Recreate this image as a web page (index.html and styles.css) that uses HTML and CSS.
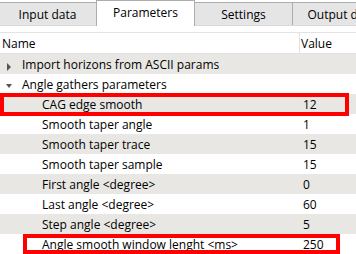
FILE: index.html
```html
<!DOCTYPE html>
<html lang="en">
<head>
  <meta charset="UTF-8" />
  <title>Parameters</title>
  <link rel="stylesheet" href="styles.css">
</head>
<body>

  <div class="tabbar">
    <div class="tab first">Input data</div>
    <div class="tab active">Parameters</div>
    <div class="tab">Settings</div>
    <div class="tab">Output data</div>
  </div>

  <div class="pane">
    <div class="tree">
      <div class="row head">
        <div class="name">Name</div>
        <div class="value">Value</div>
      </div>

      <div class="row alt">
        <div class="name lvl1"><span class="arrow closed"></span>Import horizons from ASCII params</div>
        <div class="value"></div>
      </div>
      <div class="row">
        <div class="name lvl1"><span class="arrow open"></span>Angle gathers parameters</div>
        <div class="value"></div>
      </div>

      <div class="row alt mark-wide">
        <div class="name lvl2">CAG edge smooth</div>
        <div class="value">12</div>
      </div>
      <div class="row">
        <div class="name lvl2">Smooth taper angle</div>
        <div class="value">1</div>
      </div>
      <div class="row alt">
        <div class="name lvl2">Smooth taper trace</div>
        <div class="value">15</div>
      </div>
      <div class="row">
        <div class="name lvl2">Smooth taper sample</div>
        <div class="value">15</div>
      </div>
      <div class="row alt">
        <div class="name lvl2">First angle &lt;degree&gt;</div>
        <div class="value">0</div>
      </div>
      <div class="row">
        <div class="name lvl2">Last angle &lt;degree&gt;</div>
        <div class="value">60</div>
      </div>
      <div class="row alt">
        <div class="name lvl2">Step angle &lt;degree&gt;</div>
        <div class="value">5</div>
      </div>
      <div class="row mark-narrow">
        <div class="name lvl2">Angle smooth window lenght &lt;ms&gt;</div>
        <div class="value">250</div>
      </div>
    </div>
  </div>

</body>
</html>
```

FILE: styles.css
```css
body {
  margin: 0;
  background: #ffffff;
  font-family: 'Open Sans', 'Noto Sans', sans-serif;
  font-size: 12px;
  color: #000000;
  overflow: hidden;
}

/* tab strip */
.tabbar {
  display: flex;
  align-items: flex-end;
  height: 26px;
  box-sizing: border-box;
  border-bottom: 1px solid #d9d9d9;
  white-space: nowrap;
}

.tab {
  flex: 0 0 99px;
  height: 23px;
  box-sizing: border-box;
  margin-left: -1px;
  border: 1px solid #adadad;
  border-bottom: none;
  background: #e5e5e5;
  display: flex;
  align-items: center;
  justify-content: center;
  padding-top: 1px;
}

.tab.first {
  margin-left: -2px;
}

.tab.active {
  height: 26px;
  margin-bottom: -1px;
  background: #ffffff;
  padding-top: 0;
  padding-bottom: 2px;
  position: relative;
}

/* tree view */
.pane {
  padding-top: 6px;
}

.tree {
  border-top: 1px solid #e3e3e3;
}

.row {
  display: grid;
  grid-template-columns: 300px 1fr;
  height: 20px;
  align-items: center;
  position: relative;
  white-space: nowrap;
}

.row.alt {
  background: #e8e7e3;
}

.row.head {
  height: 20px;
  border-bottom: 1px solid #e3e3e3;
  box-sizing: border-box;
  height: 21px;
}

.head .name {
  padding-left: 2px;
}

.head .value {
  height: 100%;
  border-left: 1px solid #e3e3e3;
  padding-left: 1px;
  display: flex;
  align-items: center;
  margin-left: -1px;
}

.name {
  display: flex;
  align-items: center;
}

.lvl1 {
  padding-left: 22px;
  position: relative;
}

.lvl2 {
  padding-left: 42px;
}

.value {
  padding-left: 3px;
}

.arrow {
  position: absolute;
  width: 0;
  height: 0;
}

.arrow.closed {
  left: 7px;
  top: 7px;
  border-top: 4px solid transparent;
  border-bottom: 4px solid transparent;
  border-left: 4px solid #555555;
}

.arrow.open {
  left: 6px;
  top: 8px;
  border-left: 3px solid transparent;
  border-right: 3px solid transparent;
  border-top: 4px solid #555555;
}

/* red annotation boxes */
.mark-wide::after,
.mark-narrow::after {
  content: '';
  position: absolute;
  box-sizing: border-box;
  border: 4px solid #ff0000;
}

.mark-wide::after {
  left: 0;
  top: -1px;
  width: 349px;
  height: 23px;
}

.mark-narrow::after {
  left: 23px;
  top: 0;
  width: 317px;
  height: 20px;
}
```
